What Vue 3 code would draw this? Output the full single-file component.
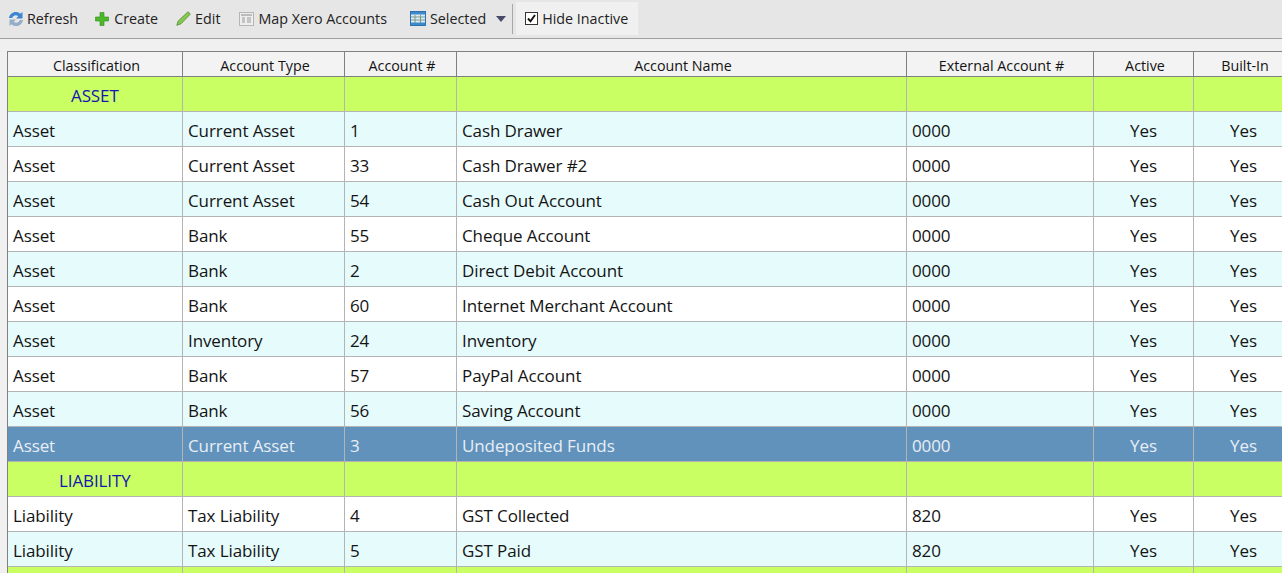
<template>
  <div class="page">
    <!-- toolbar -->
    <div class="toolbar">
      <div class="tool tool-refresh">
        <svg width="18" height="18" viewBox="0 0 18 18">
          <path d="M2 8C2.600 4 6 1.500 9.800 2c1.500.2 2.700.9 3.600 1.800L15.500 2v6.500H9l2.300-2.300C9.300 4.500 6.200 5 5.200 8z" fill="#3f86d2" />
          <path d="M16 10c-.6 4-4 6.500-7.800 6-1.500-.2-2.700-.9-3.600-1.800L2.500 16v-6.500H9l-2.300 2.300c2 1.700 5.100 1.200 6.100-1.800z" fill="#93aec6" />
        </svg>
        <span>Refresh</span>
      </div>
      <div class="tool tool-create">
        <svg width="14" height="14" viewBox="0 0 14 14">
          <path d="M5 .5h4v4.500h4.500v4H9v4.500H5V9H.5V5H5z" fill="#4cb82a" stroke="#2f8a1c" stroke-width="0.6" />
        </svg>
        <span>Create</span>
      </div>
      <div class="tool tool-edit">
        <svg width="15" height="15" viewBox="0 0 15 15">
          <path d="M12 .8L14.300 3 5 12.800 .8 14.300 2.200 10z" fill="#86c850" stroke="#4a8a2a" stroke-width="0.8" />
        </svg>
        <span>Edit</span>
      </div>
      <div class="tool tool-map">
        <svg width="15" height="14" viewBox="0 0 15 14">
          <rect x="0.500" y="0.500" width="14" height="13" fill="#eee" stroke="#b5b5b5" />
          <path d="M2 3h11" stroke="#aaa" stroke-width="1.500" />
          <path d="M3 6h3M3 8h3M3 10h3M8 6h4M8 8h4M8 10h4" stroke="#999" />
        </svg>
        <span>Map Xero Accounts</span>
      </div>
      <div class="tool tool-selected">
        <svg width="16" height="15" viewBox="0 0 16 15">
          <rect x="0.500" y="0.500" width="15" height="14" fill="#dcebf7" stroke="#2a72b5" />
          <rect x="1" y="1" width="14" height="2.500" fill="#3f8ac6" />
          <path d="M1 6h14M1 9h14M5 4v8M10.500 4v8" stroke="#7a9a86" />
          <rect x="1" y="11.500" width="14" height="2.500" fill="#3f8ac6" />
        </svg>
        <span>Selected</span>
        <span class="caret" />
      </div>
      <div class="sep" />
      <label class="hide-inactive">
        <span class="check">
          <svg width="9" height="9" viewBox="0 0 9 9">
            <path d="M1 4.500l2.500 2.800L8 1" fill="none" stroke="#111" stroke-width="1.900" />
          </svg>
        </span>
        <span>Hide Inactive</span>
      </label>
    </div>

    <!-- table -->
    <div class="table">
      <div class="row head">
        <div v-for="c in columns" :key="c" class="cell">{{ c }}</div>
      </div>
      <template v-for="(r, i) in rows" :key="i">
        <div v-if="r.isGroup" class="row group">
          <div class="cell" :style="{ paddingLeft: r.indent + 'px' }">{{ r.group }}</div>
          <div v-for="n in 6" :key="n" class="cell" />
        </div>
        <div v-else class="row" :class="{ alt: r.alt, selected: r.selected }">
          <div class="cell">{{ r.cls }}</div>
          <div class="cell">{{ r.type }}</div>
          <div class="cell">{{ r.num }}</div>
          <div class="cell">{{ r.name }}</div>
          <div class="cell">{{ r.ext }}</div>
          <div class="cell mid">Yes</div>
          <div class="cell mid">Yes</div>
        </div>
      </template>
    </div>
  </div>
</template>

<script setup>
const columns = ['Classification', 'Account Type', 'Account #', 'Account Name', 'External Account #', 'Active', 'Built-In']

const asset = (type, num, name, alt, selected = false) => ({ cls: 'Asset', type, num, name, ext: '0000', alt, selected })
const liability = (num, name, alt) => ({ cls: 'Liability', type: 'Tax Liability', num, name, ext: '820', alt })
const group = (label, indent) => ({ isGroup: true, group: label, indent })

const rows = [
  group('ASSET', 63),
  asset('Current Asset', 1, 'Cash Drawer', true),
  asset('Current Asset', 33, 'Cash Drawer #2', false),
  asset('Current Asset', 54, 'Cash Out Account', true),
  asset('Bank', 55, 'Cheque Account', false),
  asset('Bank', 2, 'Direct Debit Account', true),
  asset('Bank', 60, 'Internet Merchant Account', false),
  asset('Inventory', 24, 'Inventory', true),
  asset('Bank', 57, 'PayPal Account', false),
  asset('Bank', 56, 'Saving Account', true),
  asset('Current Asset', 3, 'Undeposited Funds', false, true),
  group('LIABILITY', 51),
  liability(4, 'GST Collected', false),
  liability(5, 'GST Paid', true),
  group('', 0),
]
</script>

<style>
html, body { margin: 0; overflow: hidden; background: #f0f0f0; }
</style>

<style scoped>
.page {
  height: 573px;
  overflow: hidden;
  background: #f0f0f0;
  font-family: "Open Sans", "Noto Sans", sans-serif;
  color: #141414;
}

.toolbar {
  display: flex;
  align-items: center;
  height: 39px;
  box-sizing: border-box;
  padding-bottom: 1px;
  background: #e6e6e6;
  border-bottom: 1px solid #a0a0a0;
  font-size: 14.3px;
  color: #222;
}
.tool { display: flex; align-items: center; gap: 4px; }
.tool-refresh { margin-left: 7px; gap: 2px; }
.tool-create { margin-left: 17px; gap: 5px; }
.tool-edit { margin-left: 18px; }
.tool-map { margin-left: 19px; }
.tool-selected { margin-left: 23px; }
.caret {
  width: 0;
  height: 0;
  margin-left: 6px;
  border-left: 5.500px solid transparent;
  border-right: 5.500px solid transparent;
  border-top: 6px solid #4a4a6a;
}
.sep {
  width: 1px;
  height: 30px;
  margin-left: 6px;
  background: #a8a8a8;
}
.hide-inactive {
  display: flex;
  align-items: center;
  gap: 4px;
  height: 33px;
  margin-left: 3px;
  padding: 0 10px 0 9px;
  background: #f0f0f0;
}
.check {
  display: flex;
  align-items: center;
  justify-content: center;
  width: 11px;
  height: 11px;
  background: #fff;
  border: 1px solid #333;
}

.table {
  margin: 12px 0 0 7px;
  border-left: 1px solid #808080;
  border-top: 1px solid #808080;
}
.row {
  display: grid;
  grid-template-columns: 175px 162px 112px 450px 187px 100px 100px;
  height: 35px;
  box-sizing: border-box;
  border-bottom: 1px solid #b4b4b4;
  background: #fff;
  font-size: 17px;
  letter-spacing: -0.1px;
}
.cell {
  display: flex;
  align-items: center;
  box-sizing: border-box;
  padding: 2px 0 0 5px;
  border-right: 1px solid #b4b4b4;
  white-space: nowrap;
}
.mid { justify-content: center; padding: 2px 0 0; }

.head {
  height: 25px;
  background: #f3f3f3;
  border-bottom: 1px solid #808080;
  font-size: 14.3px;
  letter-spacing: 0;
}
.head .cell {
  justify-content: center;
  padding: 2px 0 0 3px;
  border-right-color: #808080;
}
.group { background: #c9ff63; color: #1515b0; }
.alt { background: #e6fbfc; }
.selected { background: #6092bc; color: #e8eef4; }
</style>
